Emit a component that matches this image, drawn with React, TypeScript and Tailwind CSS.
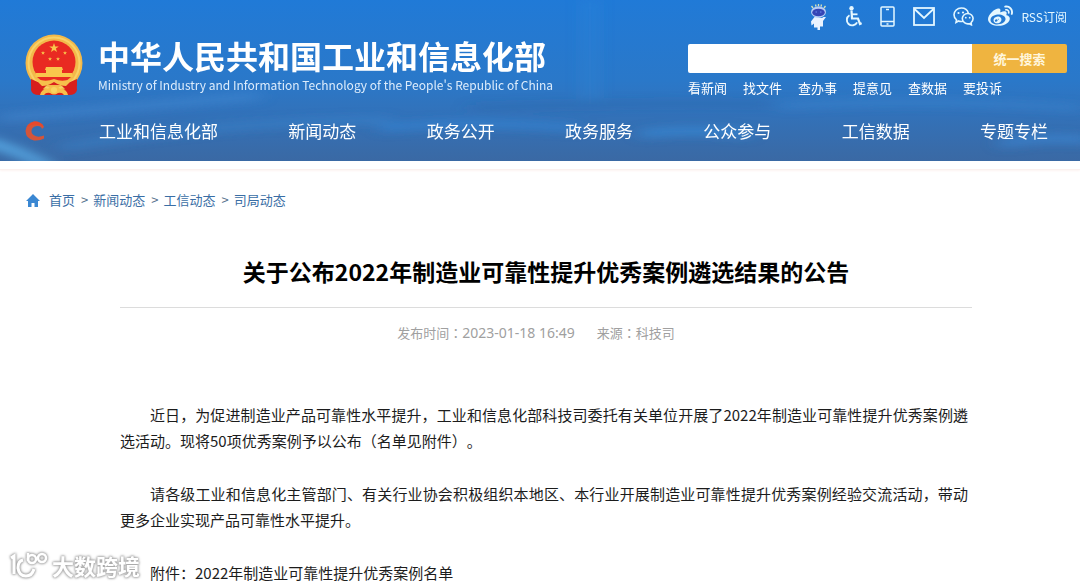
import { FaWeibo } from "react-icons/fa";

const navItems = [
    "工业和信息化部",
    "新闻动态",
    "政务公开",
    "政务服务",
    "公众参与",
    "工信数据",
    "专题专栏",
];

const quickLinks = ["看新闻", "找文件", "查办事", "提意见", "查数据", "要投诉"];

const crumbs = ["首页", "新闻动态", "工信动态", "司局动态"];

const paragraphs = [
    "近日，为促进制造业产品可靠性水平提升，工业和信息化部科技司委托有关单位开展了2022年制造业可靠性提升优秀案例遴选活动。现将50项优秀案例予以公布（名单见附件）。",
    "请各级工业和信息化主管部门、有关行业协会积极组织本地区、本行业开展制造业可靠性提升优秀案例经验交流活动，带动更多企业实现产品可靠性水平提升。",
    "附件：2022年制造业可靠性提升优秀案例名单",
];

const STAR = "M0-5 1.2-1.6 4.8-1.6 1.9.6 3 4 0 1.9-3 4-1.9.6-4.8-1.6-1.2-1.6Z";

const Emblem = () => (
    <svg viewBox="0 0 58 62" className="w-[58px] h-[62px] shrink-0" aria-hidden="true">
        <path d="M7 42 6 56q1 5 8 5h30q7 0 8-5l-1-14Z" fill="#d81f1c" />
        <circle cx="29" cy="29" r="28.500" fill="#f3b94a" />
        <circle cx="29" cy="29" r="25.500" fill="none" stroke="#f8d267" strokeWidth="2" />
        <circle cx="29" cy="28" r="21.500" fill="#e92a22" />
        <g fill="#f9c74c">
            <path d={STAR} transform="translate(29 14)" />
            <path d={STAR} transform="translate(18 19) scale(.42)" />
            <path d={STAR} transform="translate(40 19) scale(.42)" />
            <path d={STAR} transform="translate(25 25) scale(.42)" />
            <path d={STAR} transform="translate(33 25) scale(.42)" />
            <path d="M21 33h16l1 3h-1v3h10l1 4H10l1-4h10v-3h-1Z" />
        </g>
        <path d="M12 43h34l-6 5H18Z" fill="#e92a22" />
        <path d="M6 45q12 7 23 0 11 7 23 0v7q-5 4-12 3l-4-4H22l-4 4q-7 1-12-3Z" fill="#d81f1c" />
        <path d="M9 44q11 5 20 1 9 4 20-1l-8 8q-6 0-12-4-6 4-12 4Z" fill="#f6c04b" />
        <path d="M15 61q1-6 8-6 1-3 6-3t6 3q7 0 8 6h-4q-2-3-6-2-4 3-8 0-4-1-6 2Z" fill="#f6c04b" />
        <circle cx="29" cy="56" r="3" fill="#f9d45f" />
    </svg>
);

const Mascot = () => (
    <svg viewBox="0 0 17 26" className="w-[17px] h-[26px]" aria-hidden="true">
        <path d="M3 4 1.500 2M6 2.500 5.500 .5M8.500 2V0M11 2.500l.5-2M14 4l1.500-2" stroke="#d8e2b4" strokeWidth="1.300" />
        <ellipse cx="8.500" cy="8" rx="7.500" ry="5.800" fill="#b4ccf5" />
        <ellipse cx="8.500" cy="8.500" rx="6.300" ry="3.800" fill="#3545b5" />
        <path d="M5.500 8h1.500M10 8h1.500" stroke="#6f8ff0" />
        <path d="M4.500 13 1 17.500l.5 4L4 19.500v4h3.500V26H10v-3.500h3V17l3-4h-2.500l-1.500 1Z" fill="#eaf3ff" />
    </svg>
);

const Wheelchair = () => (
    <svg viewBox="0 0 17 21" className="w-[17px] h-[21px]" fill="none" stroke="currentColor" aria-hidden="true">
        <circle cx="6.500" cy="2.200" r="2.200" fill="currentColor" stroke="none" />
        <path d="M6.500 4.500 7 12.500h6l2 5.500 1.700-.7" strokeWidth="2.200" />
        <path d="M7 8.300h5.500" strokeWidth="1.800" />
        <path d="M4.500 9.300a5.400 5.400 0 1 0 7.600 7" strokeWidth="1.900" />
    </svg>
);

const Phone = () => (
    <svg viewBox="0 0 15 21" className="w-[15px] h-[21px]" fill="none" stroke="currentColor" strokeWidth="1.500" aria-hidden="true">
        <rect x="1" y="1" width="13" height="19" rx="1" />
        <path d="M1 15.500h13M6 3.500h3M6.500 18h2" />
    </svg>
);

const Envelope = () => (
    <svg viewBox="0 0 22 19" className="w-[22px] h-[19px]" fill="none" stroke="currentColor" strokeWidth="1.800" aria-hidden="true">
        <rect x="1" y="1" width="20" height="17" />
        <path d="m1.500 2 9.500 9 9.500-9" />
    </svg>
);

const Wechat = () => (
    <svg viewBox="0 0 21 19" className="w-[21px] h-[19px]" fill="none" stroke="currentColor" strokeWidth="1.600" aria-hidden="true">
        <path d="M10 14.300q-2.500.5-4.500-.3L3 15.500l.5-2.700Q1 11 1 7.800C1 4 4.300 1 8.300 1c3.500 0 6.300 2 7 5.200" />
        <path d="M14.700 6.500c3 0 5.400 2.300 5.400 5.100 0 1.700-.8 3-2 4l.3 2.200-2.200-1.100c-3.500.8-6.900-1.700-6.900-5.100 0-2.800 2.400-5.100 5.400-5.100Z" />
        <g fill="currentColor" stroke="none">
            <circle cx="5.500" cy="6" r="1.100" />
            <circle cx="10" cy="5.500" r="1.100" />
            <circle cx="12.800" cy="10.700" r=".9" />
            <circle cx="16.700" cy="10.700" r=".9" />
        </g>
    </svg>
);

const Ripples = () => (
    <svg viewBox="0 0 1080 161" preserveAspectRatio="none" className="absolute inset-0 w-full h-full" aria-hidden="true">
        <defs>
            <filter id="soft" filterUnits="userSpaceOnUse" x="-40" y="-40" width="1160" height="240">
                <feGaussianBlur stdDeviation="9 4" />
            </filter>
        </defs>
        <g filter="url(#soft)" fill="none">
            <path d="M-20 140q40 10 70 28" stroke="#5cb4ee" strokeWidth="9" opacity=".9" />
            <path d="M0 118q120-10 260-22" stroke="#4a93dc" strokeWidth="7" opacity=".45" />
            <path d="M60 148q150-26 330-28" stroke="#3f8fdd" strokeWidth="8" opacity=".35" />
            <path d="M380 128q90-8 200 0" stroke="#2f8be0" strokeWidth="9" opacity=".5" />
            <path d="M470 108q160-6 300-4" stroke="#2f5f9e" strokeWidth="7" opacity=".3" />
            <path d="M640 134q50-6 110 0" stroke="#3a94e6" strokeWidth="9" opacity=".5" />
            <path d="M780 106q140-8 300 2" stroke="#3d8bd8" strokeWidth="7" opacity=".4" />
            <path d="M1000 144q40-8 90-4" stroke="#3c8fe0" strokeWidth="9" opacity=".5" />
            <path d="M590 0v100" stroke="#3f93e2" strokeWidth="12" opacity=".25" />
        </g>
    </svg>
);

const Header = () => (
    <header className="relative bg-linear-to-b from-[#207ad7] via-[#2a78c9] to-[#3a69a4] text-white overflow-hidden">
        <Ripples />
        <div className="relative">
            <div className="flex justify-between pl-[25px] pr-[13px] h-[101px]">
                <div className="flex gap-[15px] pt-[34px]">
                    <Emblem />
                    <div>
                        <h1 className="text-[32px] leading-[43px] font-bold whitespace-nowrap">
                            中华人民共和国工业和信息化部
                        </h1>
                        <p className="text-xs leading-4 text-[#dcecfc] whitespace-nowrap">
                            Ministry of Industry and Information Technology of the People's Republic of China
                        </p>
                    </div>
                </div>

                <div className="w-[379px]">
                    <div className="flex items-center justify-end gap-[18px] h-[33px] text-[#e4f7ff]">
                        <a href="#" aria-label="智能问答"><Mascot /></a>
                        <a href="#" aria-label="无障碍"><Wheelchair /></a>
                        <a href="#" aria-label="手机版"><Phone /></a>
                        <a href="#" aria-label="邮箱"><Envelope /></a>
                        <a href="#" aria-label="微信"><Wechat /></a>
                        <div className="flex items-center gap-2 -ml-1">
                            <a href="#" aria-label="微博"><FaWeibo className="w-[25px] h-[25px]" /></a>
                            <a href="#" className="text-xs whitespace-nowrap">RSS订阅</a>
                        </div>
                    </div>
                    <form className="flex h-[29px] mt-[11px] rounded-xs overflow-hidden">
                        <input type="text" aria-label="搜索" className="flex-1 min-w-0 bg-white px-2 text-sm text-gray-800 outline-none" />
                        <button type="button" className="w-[95px] bg-[#efb440] text-[13px] font-bold text-[#fff6dc]">
                            统一搜索
                        </button>
                    </form>
                    <div className="flex gap-4 mt-[5px] text-[13px] leading-5">
                        {quickLinks.map((link) => (
                            <a key={link} href="#">{link}</a>
                        ))}
                    </div>
                </div>
            </div>

            <nav className="flex items-center h-[60px] pl-[25px] pr-8">
                <svg viewBox="0 0 20 22" className="w-5 h-[22px] mr-[54px]" aria-hidden="true">
                    <path d="M19 7Q16 1 9 1.500 1 3 .5 11 1 19 9 20.500q6 .5 10-2v-3q-5 2-8.500.5Q6 14 6.500 10.500 7 6.500 12 6q4-.5 5 3Z" fill="#d4553a" />
                    <path d="M19 7Q16 1 9 1.500 4 3 2 7q8-5 17 0Z" fill="#e8482c" />
                </svg>
                <div className="flex flex-1 justify-between text-[17px] leading-6">
                    {navItems.map((item) => (
                        <a key={item} href="#" className="whitespace-nowrap">{item}</a>
                    ))}
                </div>
            </nav>
        </div>
    </header>
);

const Breadcrumb = () => (
    <div className="flex items-center gap-[9px] pl-[26px] text-[13px] leading-5 text-[#3a6ea5]">
        <svg viewBox="0 0 14 13" className="w-[14px] h-[13px]" fill="#3a87d2" aria-hidden="true">
            <path d="M7 0 0 7h2v6h3.500V9h3v4H12V7h2Z" />
        </svg>
        <div className="flex gap-[6px]">
            {crumbs.map((crumb, index) => (
                <span key={crumb} className="flex gap-[5px]">
                    {index > 0 && <span className="text-[#55708c]">&gt;</span>}
                    <a href="#">{crumb}</a>
                </span>
            ))}
        </div>
    </div>
);

const Watermark = () => (
    <div className="absolute left-[9px] bottom-[6px] flex items-center gap-1 text-white drop-shadow-[0_0_1px_#8c8c8c]">
        <svg viewBox="0 0 39 30" className="w-[39px] h-[30px] drop-shadow-[0_0_1px_#b4b4b4]" fill="none" stroke="currentColor" strokeWidth="3" aria-hidden="true">
            <path d="M2 8 5 6v18" />
            <path d="M14 10q-5 1-5 8 1 8 8 8 6 0 8-7" />
            <path d="M19 3v8" strokeWidth="2.500" />
            <circle cx="23" cy="9" r="4" strokeWidth="2.500" />
            <circle cx="33" cy="8" r="4" strokeWidth="2.500" />
        </svg>
        <span className="text-[22px] leading-7 font-bold drop-shadow-[0_0_1px_#b4b4b4]">大数跨境</span>
    </div>
);

export default function App() {
    return (
        <div
            lang="zh-CN"
            className="relative bg-white font-['Noto_Sans_CJK_SC','Noto_Sans',sans-serif] [text-spacing-trim:space-all] overflow-hidden"
        >
            <Header />
            <div className="h-[9px] border-b border-[#fbf1ef] shadow-[0_1px_2px_#fdf3f1]" />

            <main className="pt-5">
                <Breadcrumb />

                <article className="ml-[120px] mr-[108px] mt-9">
                    <h2 className="pt-2 pb-[19px] text-[23px] leading-[34px] font-bold text-center text-black border-b border-[#dcdcdc]">
                        关于公布2022年制造业可靠性提升优秀案例遴选结果的公告
                    </h2>
                    <div
                        lang="zh-TW"
                        className="flex justify-center gap-[22px] mt-[15px] pr-5 text-[13px] leading-5 text-[#a0a0a0] font-['Noto_Sans_CJK_TC',sans-serif]"
                    >
                        <span className="flex">
                            发布时间：
                            <time className="font-['Noto_Sans',sans-serif] text-sm leading-5">2023-01-18 16:49</time>
                        </span>
                        <span>来源：科技司</span>
                    </div>
                    <div className="mt-[59px] pr-1 text-[15px] leading-[26px] text-[#1c1c1c] text-justify">
                        {paragraphs.map((text) => (
                            <p key={text} className="indent-[30px] mb-[27px] last:mb-0">{text}</p>
                        ))}
                    </div>
                </article>
            </main>

            <Watermark />
        </div>
    );
}
